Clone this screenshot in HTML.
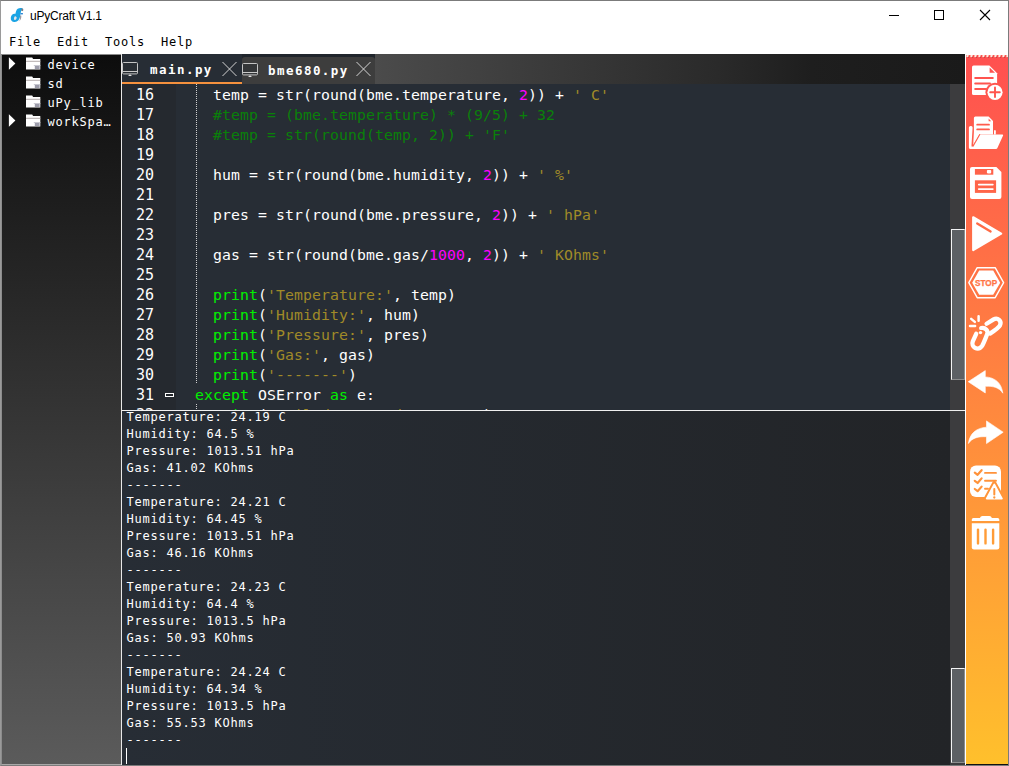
<!DOCTYPE html>
<html lang="en">
<head>
<meta charset="utf-8">
<title>uPyCraft V1.1</title>
<style>
*{box-sizing:border-box;margin:0;padding:0}
html,body{width:1009px;height:766px;overflow:hidden;background:#fff}
body{position:relative;font-family:"Liberation Sans",sans-serif;color:#000}
.abs{position:absolute}
#win{position:absolute;left:0;top:0;width:1009px;height:766px;border:1px solid #7b7b7b;border-left-color:#9a9a9a;pointer-events:none;z-index:50}
#title{position:absolute;left:30px;top:8px;font:12px/16px "Liberation Sans",sans-serif;color:#000;letter-spacing:-.23px}
#menu{position:absolute;left:9px;top:33px;height:18px;font:12px/18px "DejaVu Sans Mono","Liberation Mono",monospace;letter-spacing:.78px;color:#000;white-space:pre}
#side{position:absolute;left:1px;top:55px;width:120px;height:710px;background:linear-gradient(180deg,#0d0d0d,#5b5b5b);border-left:1px solid #8c8c8c;border-bottom:1px solid #a8a8a8}
#sidetop{position:absolute;left:1px;top:54px;width:120px;height:1px;background:#8a8a8a}
.tree{position:absolute;left:0;height:19px;width:120px;font:12px/19px "DejaVu Sans Mono","Liberation Mono",monospace;letter-spacing:.78px;color:#fff;white-space:pre}
.tree .lbl{position:absolute;left:45.4px;top:1px}
.tree svg{position:absolute}
#vline{position:absolute;left:121px;top:54px;width:1px;height:711px;background:#e8e8e8}
#tabs{position:absolute;left:122px;top:54px;width:843px;height:30px;background:#20252c}
#tabrest{position:absolute;left:253px;top:0;width:590px;height:30px;background:linear-gradient(90deg,#4b4b4b 0%,#2a2a2a 58%,#1e1e1e 74%,#1a1a1a 100%)}
#tab1{position:absolute;left:0;top:0;width:120px;height:30px;background:#272d35;border-bottom:2px solid #f5913e}
#tab2{position:absolute;left:120px;top:3px;width:133px;height:27px;background:#3d3d3d;border-radius:3px 3px 0 0}
.tabt{position:absolute;font:bold 12.5px/20px "DejaVu Sans Mono","Liberation Mono",monospace;letter-spacing:1.45px;color:#fff;white-space:pre}
#ed{position:absolute;left:122px;top:84px;width:828px;height:326px;background:#272d35;overflow:hidden}
#gut{position:absolute;left:0;top:0;width:54px;height:326px;background:#25292f}
.guide{position:absolute;left:74px;top:0;width:1px;height:299px;background:repeating-linear-gradient(180deg,#d0d0d0 0 1px,transparent 1px 2px)}
.ln{position:absolute;left:0;height:20px;width:828px;font:14.8px/20px "DejaVu Sans Mono","Liberation Mono",monospace;letter-spacing:.09px;color:#fff;white-space:pre}
.ln b{position:absolute;left:14px;font-weight:normal;font-size:15px;letter-spacing:-.03px}
.ln i{position:absolute;left:91px;font-style:normal}
.ln i.o{left:73px}
.c{color:#0a800a}.n{color:#ff00ff}.s{color:#a08a28}.k{color:#00f000}
#hline{position:absolute;left:122px;top:410px;width:843px;height:1px;background:#f0f0f0}
#term{position:absolute;left:122px;top:411px;width:828px;height:354px;background:linear-gradient(90deg,#272d35,#222427);overflow:hidden}
.tl{position:absolute;left:4.4px;height:17px;font:12px/17px "DejaVu Sans Mono","Liberation Mono",monospace;letter-spacing:.78px;color:#fff;white-space:pre}
.sb{position:absolute;left:950px;width:15px;background:#3c3c3e}
.th{position:absolute;left:1px;width:13.5px;background:#5d6064;border:1px solid #f4f4f4;border-right-color:#8d8d8d;border-bottom-color:#8d8d8d}
#tb{position:absolute;left:966px;top:55px;width:42px;height:709px;border-bottom:0;box-shadow:0 1px 0 #111;background:linear-gradient(180deg,#ff5050,#ffc02c)}
#tb svg{position:absolute;left:0;top:0}
#cur{position:absolute;left:4px;top:337px;width:1px;height:16px;background:#fff}
</style>
</head>
<body>
<svg class="abs" style="left:880px;top:0" width="128" height="30" viewBox="880 0 128 30"><rect x="889" y="15" width="10" height="1" fill="#000"/><rect x="934.5" y="10.5" width="9" height="9" fill="none" stroke="#000" stroke-width="1"/><path d="M980 10 L990 20 M990 10 L980 20" stroke="#000" stroke-width="1.1" fill="none"/></svg>
<svg class="abs" style="left:8px;top:6px" width="18" height="18" viewBox="8 6 18 18"><path d="M22.7 8.5 C20 7.5 16.9 8.3 16 11.4 L15.3 14 C13.4 13.4 11.2 14.8 10.8 17.6 C10.4 20.6 12.2 22.2 14.8 22 C17.8 21.8 19.3 19.8 19.9 17.2 L21 11.6 C21.2 10.4 21.8 10 22.8 10.4 Z" fill="#1ba4e4"/><ellipse cx="15.3" cy="18.2" rx="1.3" ry="1.9" fill="#e4e4ea" transform="rotate(18 15.3 18.2)"/><path d="M21.6 8.3 L23.3 9 L23 11.2 L21.2 10.5 Z" fill="#7c7c84"/><rect x="20.5" y="13" width="2.4" height="1.4" fill="#2d86d4"/><path d="M20 15.4 L21.3 15.4 C21.5 17.6 20.8 19.8 19.4 21.2 C20 19.2 20.1 17.2 20 15.4 Z" fill="#9a9aa2"/></svg>
<div id="title">uPyCraft V1.1</div>
<div id="menu">File  Edit  Tools  Help</div>

<div id="side">
  <div class="tree" style="top:0px"><svg style="left:-1px;top:-.6px" width="45" height="19" viewBox="0 0 45 19"><path d="M7.9 3.3 L14.4 9.5 L7.9 15.7 Z" fill="#fff"/><path d="M25 3.4 h6.2 l.9 1.6 h7.2 v10.4 h-14.3 Z" fill="#fff"/><rect x="25" y="6.8" width="14.3" height="1" fill="#b4acac"/><rect x="33.8" y="11.2" width="4.8" height="3.8" fill="#9c9caa"/><rect x="32.8" y="11" width="6.5" height="1" fill="#c8c8d0"/></svg><span class="lbl">device</span></div>
  <div class="tree" style="top:19px"><svg style="left:-1px;top:-.6px" width="45" height="19" viewBox="0 0 45 19"><path d="M25 3.4 h6.2 l.9 1.6 h7.2 v10.4 h-14.3 Z" fill="#fff"/><rect x="25" y="6.8" width="14.3" height="1" fill="#b4acac"/><rect x="33.8" y="11.2" width="4.8" height="3.8" fill="#9c9caa"/><rect x="32.8" y="11" width="6.5" height="1" fill="#c8c8d0"/></svg><span class="lbl">sd</span></div>
  <div class="tree" style="top:38px"><svg style="left:-1px;top:-.6px" width="45" height="19" viewBox="0 0 45 19"><path d="M25 3.4 h6.2 l.9 1.6 h7.2 v10.4 h-14.3 Z" fill="#fff"/><rect x="25" y="6.8" width="14.3" height="1" fill="#b4acac"/><rect x="33.8" y="11.2" width="4.8" height="3.8" fill="#9c9caa"/><rect x="32.8" y="11" width="6.5" height="1" fill="#c8c8d0"/></svg><span class="lbl">uPy_lib</span></div>
  <div class="tree" style="top:57px"><svg style="left:-1px;top:-.6px" width="45" height="19" viewBox="0 0 45 19"><path d="M7.9 3.3 L14.4 9.5 L7.9 15.7 Z" fill="#fff"/><path d="M25 3.4 h6.2 l.9 1.6 h7.2 v10.4 h-14.3 Z" fill="#fff"/><rect x="25" y="6.8" width="14.3" height="1" fill="#b4acac"/><rect x="33.8" y="11.2" width="4.8" height="3.8" fill="#9c9caa"/><rect x="32.8" y="11" width="6.5" height="1" fill="#c8c8d0"/></svg><span class="lbl">workSpa…</span></div>
</div>
<div id="sidetop"></div>
<div id="vline"></div>
<div id="tabs">
  <div id="tab1"></div>
  <div id="tab2"></div>
  <div id="tabrest"></div>
  <svg class="abs" style="left:0.2px;top:7px" width="18" height="16" viewBox="0 0 18 16"><rect x="0.5" y="1.5" width="15" height="11.4" rx="1" fill="#2c2f33" fill-opacity=".5" stroke="#c4c4c4" stroke-width="1"/><rect x="1" y="10" width="14" height="1" fill="#c8c8c8"/><path d="M6 15 L8 13.2 L10 15 Z" fill="#e0e0e0"/></svg><svg class="abs" style="left:100px;top:7px" width="16" height="16" viewBox="0 0 16 16"><path d="M0.5 1 L14.5 15 M14.5 1 L0.5 15" stroke="#dcdcdc" stroke-width="0.95" fill="none"/></svg><svg class="abs" style="left:120.1px;top:8px" width="18" height="16" viewBox="0 0 18 16"><rect x="0.5" y="1.5" width="15" height="11.4" rx="1" fill="#2c2f33" fill-opacity=".5" stroke="#c4c4c4" stroke-width="1"/><rect x="1" y="10" width="14" height="1" fill="#c8c8c8"/><path d="M6 15 L8 13.2 L10 15 Z" fill="#e0e0e0"/></svg><svg class="abs" style="left:233.5px;top:7px" width="16" height="16" viewBox="0 0 16 16"><path d="M0.5 1 L14.5 15 M14.5 1 L0.5 15" stroke="#dcdcdc" stroke-width="0.95" fill="none"/></svg>
  <div class="tabt" style="left:28px;top:6px">main.py</div>
  <div class="tabt" style="left:146px;top:7px">bme680.py</div>
</div>

<div id="ed">
  <div id="gut"></div>
  <div class="guide"></div>
  <div class="guide" style="top:320px;height:6px"></div>
  <div class="abs" style="left:43px;top:308.5px;width:9px;height:4px;background:#fff"><div class="abs" style="left:1px;top:1px;width:7px;height:2px;background:#20242a"></div></div>
  <div class="ln" style="top:1px"><b>16</b><i>temp = str(round(bme.temperature, <span class="n">2</span>)) + <span class="s">' C'</span></i></div>
  <div class="ln" style="top:21px"><b>17</b><i class="c">#temp = (bme.temperature) * (9/5) + 32</i></div>
  <div class="ln" style="top:41px"><b>18</b><i class="c">#temp = str(round(temp, 2)) + 'F'</i></div>
  <div class="ln" style="top:61px"><b>19</b></div>
  <div class="ln" style="top:81px"><b>20</b><i>hum = str(round(bme.humidity, <span class="n">2</span>)) + <span class="s">' %'</span></i></div>
  <div class="ln" style="top:101px"><b>21</b></div>
  <div class="ln" style="top:121px"><b>22</b><i>pres = str(round(bme.pressure, <span class="n">2</span>)) + <span class="s">' hPa'</span></i></div>
  <div class="ln" style="top:141px"><b>23</b></div>
  <div class="ln" style="top:161px"><b>24</b><i>gas = str(round(bme.gas/<span class="n">1000</span>, <span class="n">2</span>)) + <span class="s">' KOhms'</span></i></div>
  <div class="ln" style="top:181px"><b>25</b></div>
  <div class="ln" style="top:201px"><b>26</b><i><span class="k">print</span>(<span class="s">'Temperature:'</span>, temp)</i></div>
  <div class="ln" style="top:221px"><b>27</b><i><span class="k">print</span>(<span class="s">'Humidity:'</span>, hum)</i></div>
  <div class="ln" style="top:241px"><b>28</b><i><span class="k">print</span>(<span class="s">'Pressure:'</span>, pres)</i></div>
  <div class="ln" style="top:261px"><b>29</b><i><span class="k">print</span>(<span class="s">'Gas:'</span>, gas)</i></div>
  <div class="ln" style="top:281px"><b>30</b><i><span class="k">print</span>(<span class="s">'-------'</span>)</i></div>
  <div class="ln" style="top:301px"><b>31</b><i class="o"><span class="k">except</span> OSError <span class="k">as</span> e:</i></div>
  <div class="ln" style="top:321px"><b>32</b><i><span class="k">print</span>(<span class="s">'Failed to read sensor.'</span>)</i></div>
</div>
<div class="sb" style="top:84px;height:326px"><div class="th" style="top:145px;height:151px"></div></div>
<div id="hline"></div>
<div id="term">
  <div class="tl" style="top:-2px">Temperature: 24.19 C</div>
  <div class="tl" style="top:15px">Humidity: 64.5 %</div>
  <div class="tl" style="top:32px">Pressure: 1013.51 hPa</div>
  <div class="tl" style="top:49px">Gas: 41.02 KOhms</div>
  <div class="tl" style="top:66px">-------</div>
  <div class="tl" style="top:83px">Temperature: 24.21 C</div>
  <div class="tl" style="top:100px">Humidity: 64.45 %</div>
  <div class="tl" style="top:117px">Pressure: 1013.51 hPa</div>
  <div class="tl" style="top:134px">Gas: 46.16 KOhms</div>
  <div class="tl" style="top:151px">-------</div>
  <div class="tl" style="top:168px">Temperature: 24.23 C</div>
  <div class="tl" style="top:185px">Humidity: 64.4 %</div>
  <div class="tl" style="top:202px">Pressure: 1013.5 hPa</div>
  <div class="tl" style="top:219px">Gas: 50.93 KOhms</div>
  <div class="tl" style="top:236px">-------</div>
  <div class="tl" style="top:253px">Temperature: 24.24 C</div>
  <div class="tl" style="top:270px">Humidity: 64.34 %</div>
  <div class="tl" style="top:287px">Pressure: 1013.5 hPa</div>
  <div class="tl" style="top:304px">Gas: 55.53 KOhms</div>
  <div class="tl" style="top:321px">-------</div>
  <div id="cur"></div>
</div>
<div class="sb" style="top:411px;height:354px"><div class="th" style="top:257px;height:95px"></div></div>

<div id="tb">
<svg width="42" height="710" viewBox="966 55 42 710">
<defs><linearGradient id="g" x1="0" y1="55" x2="0" y2="765" gradientUnits="userSpaceOnUse"><stop offset="0" stop-color="#ff5050"/><stop offset="1" stop-color="#ffc02c"/></linearGradient></defs>
<g><rect x="966.6" y="55.2" width="2" height="2" fill="#fff1e4"/><rect x="967.6" y="56.2" width="1.6" height="1.6" fill="#b82424" opacity=".7"/><rect x="966.6" y="55.2" width="1.7" height="1.7" fill="#fff1e4"/><rect x="970.6" y="55.2" width="2" height="2" fill="#fff1e4"/><rect x="971.6" y="56.2" width="1.6" height="1.6" fill="#b82424" opacity=".7"/><rect x="970.6" y="55.2" width="1.7" height="1.7" fill="#fff1e4"/><rect x="974.6" y="55.2" width="2" height="2" fill="#fff1e4"/><rect x="975.6" y="56.2" width="1.6" height="1.6" fill="#b82424" opacity=".7"/><rect x="974.6" y="55.2" width="1.7" height="1.7" fill="#fff1e4"/><rect x="978.6" y="55.2" width="2" height="2" fill="#fff1e4"/><rect x="979.6" y="56.2" width="1.6" height="1.6" fill="#b82424" opacity=".7"/><rect x="978.6" y="55.2" width="1.7" height="1.7" fill="#fff1e4"/><rect x="982.6" y="55.2" width="2" height="2" fill="#fff1e4"/><rect x="983.6" y="56.2" width="1.6" height="1.6" fill="#b82424" opacity=".7"/><rect x="982.6" y="55.2" width="1.7" height="1.7" fill="#fff1e4"/><rect x="986.6" y="55.2" width="2" height="2" fill="#fff1e4"/><rect x="987.6" y="56.2" width="1.6" height="1.6" fill="#b82424" opacity=".7"/><rect x="986.6" y="55.2" width="1.7" height="1.7" fill="#fff1e4"/><rect x="990.6" y="55.2" width="2" height="2" fill="#fff1e4"/><rect x="991.6" y="56.2" width="1.6" height="1.6" fill="#b82424" opacity=".7"/><rect x="990.6" y="55.2" width="1.7" height="1.7" fill="#fff1e4"/><rect x="994.6" y="55.2" width="2" height="2" fill="#fff1e4"/><rect x="995.6" y="56.2" width="1.6" height="1.6" fill="#b82424" opacity=".7"/><rect x="994.6" y="55.2" width="1.7" height="1.7" fill="#fff1e4"/><rect x="998.6" y="55.2" width="2" height="2" fill="#fff1e4"/><rect x="999.6" y="56.2" width="1.6" height="1.6" fill="#b82424" opacity=".7"/><rect x="998.6" y="55.2" width="1.7" height="1.7" fill="#fff1e4"/><rect x="1002.6" y="55.2" width="2" height="2" fill="#fff1e4"/><rect x="1003.6" y="56.2" width="1.6" height="1.6" fill="#b82424" opacity=".7"/><rect x="1002.6" y="55.2" width="1.7" height="1.7" fill="#fff1e4"/><rect x="1006.6" y="55.2" width="2" height="2" fill="#fff1e4"/><rect x="1007.6" y="56.2" width="1.6" height="1.6" fill="#b82424" opacity=".7"/><rect x="1006.6" y="55.2" width="1.7" height="1.7" fill="#fff1e4"/></g>
<path d="M973.6 65.6 H989.4 L997.1 73.3 V93.5 Q997.1 95 995.6 95 H973.6 Q972 95 972 93.5 V67.2 Q972 65.6 973.6 65.6 Z" fill="#fff"/>
<path d="M989.6 67.4 V72.8 H995 Z" fill="url(#g)"/>
<path d="M975.2 78 H992.8 M975.2 83.6 H990 M975.2 89 H986" stroke="url(#g)" stroke-width="2" stroke-linecap="round" fill="none"/>
<circle cx="995" cy="92.3" r="9.6" fill="url(#g)"/><circle cx="995" cy="92.3" r="7.6" fill="#fff"/>
<path d="M990.2 92.3 H999.8 M995 87.5 V97.1" stroke="url(#g)" stroke-width="1.9" stroke-linecap="round" fill="none"/>
<path d="M975.4 116.6 H988.6 L993 121 V134.4 H979.4 L973.2 145 L973.9 132 V118.1 Q973.9 116.6 975.4 116.6 Z" fill="#fff"/>
<path d="M988.6 118.4 V121.2 H991.2 Z" fill="url(#g)"/>
<path d="M977.2 124.7 H989 M977.2 129.4 H989" stroke="url(#g)" stroke-width="1.8" stroke-linecap="round" fill="none"/>
<path d="M970.6 126 Q968.9 126 968.9 127.6 V147.4 Q968.9 149 970.6 149 H996 Q996.9 149 997.3 148.2 L1003.1 135.6 Q1003.5 134.4 1002.2 134.4 H980.4 Q979.4 134.4 978.9 135.3 L972.6 146.4 Q971.6 147.6 971.5 145.6 L972.6 127.6 Q972.6 126 971.2 126 Z" fill="#fff"/>
<path d="M979.9 134.3 L972.9 146.6" stroke="url(#g)" stroke-width="1.1" fill="none"/>
<path d="M994 134.4 V131.2 Q994 130 994.9 130 Q995.8 130 995.8 131.2 V134.4 Z" fill="#fff"/>
<path d="M972 166.9 H996.4 L1001.4 171.9 V196.9 Q1001.4 198.9 999.4 198.9 H972 Q970 198.9 970 196.9 V168.9 Q970 166.9 972 166.9 Z" fill="#fff"/>
<rect x="974.9" y="169" width="18.4" height="5.7" fill="url(#g)"/><rect x="986.9" y="170.1" width="4.3" height="3.3" rx=".8" fill="#fff"/>
<rect x="974.9" y="180.3" width="21.2" height="12.6" fill="url(#g)"/>
<path d="M978.8 184.6 H992.8 M978.8 189.1 H992.8" stroke="#fff" stroke-width="1.8" stroke-linecap="round" fill="none"/>
<path d="M973.2 217.3 L1001.2 233.6 L973.2 250 Z" fill="#fff" stroke="#fff" stroke-width="2.2" stroke-linejoin="round"/>
<path d="M977.2 223.4 L990.6 231.5" stroke="url(#g)" stroke-width="2.3" stroke-linecap="round"/>
<path d="M977.2 267.7 H995.2 L1003.6 282.7 L995.2 297.7 H977.2 L968.8 282.7 Z" fill="none" stroke="#fff" stroke-width="1.4" stroke-linejoin="round"/>
<path d="M979.2 270.6 H993.2 L1000.2 282.7 L993.2 294.8 H979.2 L972.2 282.7 Z" fill="#fff"/>
<text x="986.1" y="285.7" text-anchor="middle" font-family="Liberation Sans, sans-serif" font-weight="bold" font-size="8.2" fill="url(#g)" stroke="url(#g)" stroke-width=".25">STOP</text>
<path d="M986.6 323.8 L993.6 319.4 C997.6 317 1002.2 320.8 999.9 325.5 C999 327.4 997.2 328.8 990 333.6" fill="none" stroke="#fff" stroke-width="4.3" stroke-linecap="round" stroke-linejoin="round"/>
<path d="M976.2 333.8 L972.8 341.4 C970.6 346.8 977.8 351.6 982 346 C983.4 344 985.4 338.6 987.1 334.4 C988.6 330.6 985.2 327.2 981.2 328.2" fill="none" stroke="#fff" stroke-width="4.3" stroke-linecap="round" stroke-linejoin="round"/>
<path d="M979.8 330.4 Q983.4 329.6 984.8 332.6" fill="none" stroke="url(#g)" stroke-width="1" />
<circle cx="980.5" cy="332.6" r="1.7" fill="#fff"/>
<path d="M971.2 318.9 L974.8 321.9 M978.6 316.3 V320.8 M970 325.9 H975.1" stroke="#fff" stroke-width="2.5" stroke-linecap="round" fill="none"/>
<path d="M968.2 381.7 L985.3 370.6 V376.9 C995 377.4 1001.6 383 1002.8 393.2 C999 387.4 993.4 386 985.3 386.3 V393 Z" fill="#fff" stroke="#fff" stroke-width=".6" stroke-linejoin="round"/>
<path d="M1003.2 432.2 L986.5 420.9 V427.2 C976.6 427.8 969.6 433.4 968.4 443.5 C972.2 437.8 978.2 436.4 986.5 436.7 V443.6 Z" fill="#fff" stroke="#fff" stroke-width=".6" stroke-linejoin="round"/>
<rect x="970" y="465.5" width="31" height="31.4" rx="6" fill="#fff"/>
<path d="M974.8 472.6 L977.6 474.8 L981.6 470.2 M974.8 480.8 L977.6 483 L981.6 478.4 M974.8 489 L977.6 491.2 L981.6 486.6" fill="none" stroke="url(#g)" stroke-width="2.2" stroke-linecap="round" stroke-linejoin="round"/>
<path d="M985 472.9 H996 M985 480.8 H996 M985 488.7 H988" stroke="url(#g)" stroke-width="1.9" stroke-linecap="round" fill="none"/>
<path d="M994.3 483.2 L1003 499.4 H985.6 Z" fill="#fff" stroke="url(#g)" stroke-width="4.4" stroke-linejoin="round"/>
<path d="M994.3 484.4 L1002 498.6 H986.6 Z" fill="#fff" stroke="#fff" stroke-width="1.6" stroke-linejoin="round"/>
<path d="M994.3 489 V494.6" stroke="url(#g)" stroke-width="2" stroke-linecap="round"/><circle cx="994.3" cy="497.5" r="1.15" fill="url(#g)"/>
<path d="M973.4 518 H979.9 Q980.6 515.9 982.4 515.9 H989.4 Q991.2 515.9 991.9 518 H997.7 Q999.3 518 999.3 519.6 V521 H971.8 V519.6 Q971.8 518 973.4 518 Z" fill="#fff"/>
<path d="M971.8 523.3 H999.3 V547.2 Q999.3 549.4 997.1 549.4 H974 Q971.8 549.4 971.8 547.2 Z" fill="#fff"/>
<path d="M978 529.6 V543.4 M985.5 529.6 V543.4 M993.1 529.6 V543.4" stroke="url(#g)" stroke-width="2.4" stroke-linecap="round" fill="none"/>
</svg>
</div>
<div id="win"></div>
</body>
</html>
